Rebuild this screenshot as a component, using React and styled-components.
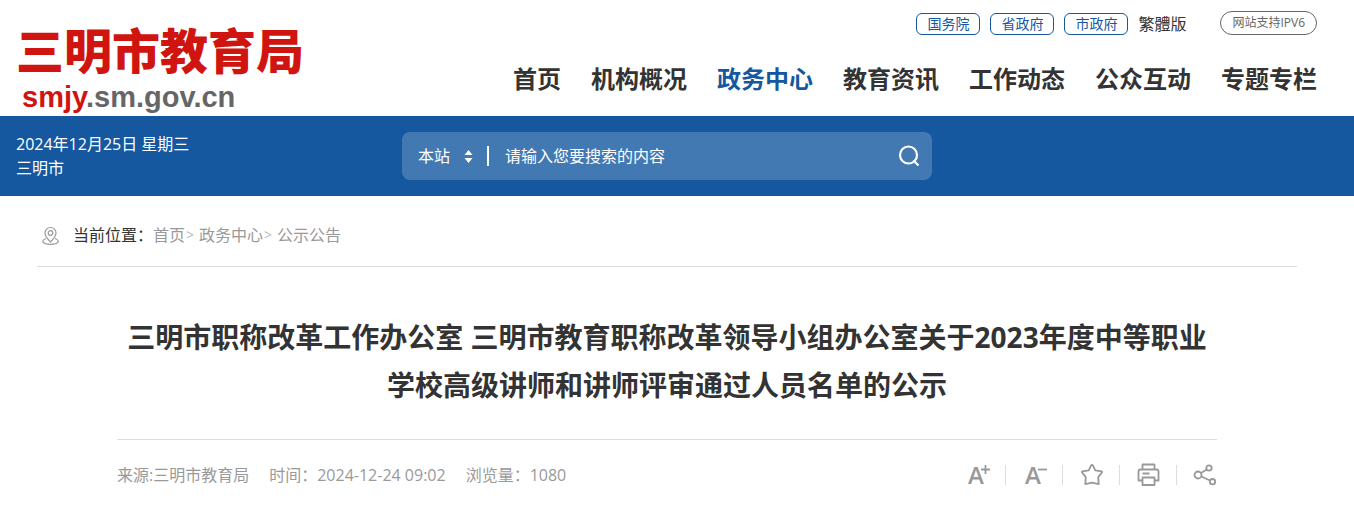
import styled, { createGlobalStyle } from 'styled-components';

const GlobalStyle = createGlobalStyle`
  * {
    box-sizing: border-box;
  }

  body {
    margin: 0;
    background: #fff;
    color: #333;
    font-family: "Open Sans", "Noto Sans CJK SC", sans-serif;
    font-size: 16px;
    line-height: 24px;
  }

  a {
    color: inherit;
    text-decoration: none;
  }

  button, input, select {
    font: inherit;
    color: inherit;
  }
`;

const Header = styled.header`
  display: flex;
  justify-content: space-between;
  padding: 11px 37px 0 16px;
  height: 116px;
`;

const Logo = styled.a`
  padding-top: 12px;
  color: #d0140f;
`;

const LogoName = styled.span`
  display: block;
  font-size: 48px;
  font-weight: 900;
  line-height: 56px;
`;

const LogoDomain = styled.span`
  display: block;
  padding-left: 6px;
  font-family: "Liberation Sans", Arial, sans-serif;
  font-size: 29px;
  font-weight: 700;
  line-height: 36px;
`;

const Gray = styled.span`
  color: #666;
`;

const HeaderRight = styled.div`
  display: flex;
  flex-direction: column;
  align-items: flex-end;
  gap: 24px;
`;

const TopLinks = styled.div`
  display: flex;
  align-items: flex-end;
  gap: 10px;
`;

const GovLink = styled.a`
  width: 64px;
  border: 1px solid #15589f;
  border-radius: 6px;
  color: #15589f;
  font-size: 14px;
  line-height: 20px;
  text-align: center;
`;

const Traditional = styled.a`
  font-family: "Noto Sans CJK TC", sans-serif;
`;

const Ipv6 = styled.span`
  margin-left: 24px;
  padding: 0 11px;
  border: 1px solid #666;
  border-radius: 12px;
  color: #666;
  font-size: 12px;
  line-height: 22px;
`;

const Nav = styled.nav`
  display: flex;
  gap: 30px;
`;

const NavLink = styled.a`
  font-size: 24px;
  font-weight: 700;
  line-height: 40px;
  color: ${(props) => (props.$active ? '#15589f' : '#333')};
`;

const Bar = styled.div`
  display: grid;
  grid-template-columns: 386px minmax(0, 530px);
  padding: 16px;
  background: #15589f;
  color: #fff;
`;

const Search = styled.form`
  display: flex;
  align-items: center;
  height: 48px;
  padding: 0 12px 0 16px;
  border-radius: 8px;
  background: rgba(255, 255, 255, 0.2);
`;

const Scope = styled.label`
  display: flex;
  align-items: center;
  gap: 12px;
  padding-right: 14px;
  border-right: 2px solid #fff;
  line-height: 20px;
`;

const ScopeSelect = styled.select`
  appearance: none;
  width: 34px;
  height: 20px;
  padding: 0;
  border: 0;
  background: none;

  option {
    color: #333;
  }
`;

const SearchInput = styled.input`
  flex: 1;
  min-width: 0;
  padding: 0 16px;
  border: 0;
  outline: 0;
  background: none;

  &::placeholder {
    color: #fff;
    opacity: 1;
  }
`;

const IconButton = styled.button`
  display: flex;
  padding: 0;
  border: 0;
  background: none;
  cursor: pointer;
`;

const Main = styled.main`
  padding: 0 57px 0 37px;
`;

const Breadcrumb = styled.nav`
  display: flex;
  align-items: center;
  padding: 27px 0 19px 4px;
  border-bottom: 1px solid #ddd;
  color: #999;

  svg {
    margin-right: 13px;
  }
`;

const Here = styled.span`
  color: #333;
`;

const Arrow = styled.span`
  margin: 0 5px 0 1px;
  color: #bbb;
  font-size: 14px;
`;

const Article = styled.article`
  max-width: 1100px;
  margin: 0 auto;
`;

const Title = styled.h1`
  margin: 0;
  padding: 46px 0 30px;
  border-bottom: 1px solid #ddd;
  font-size: 28px;
  line-height: 48px;
  text-align: center;
`;

const Meta = styled.div`
  display: flex;
  justify-content: space-between;
  align-items: center;
  padding: 23px 0;
  color: #999;
`;

const Facts = styled.div`
  display: flex;
  gap: 20px;
`;

const Tools = styled.div`
  display: flex;
`;

const Tool = styled.div`
  display: flex;
  align-items: center;
  height: 20px;
  padding: 0 16px;

  & + & {
    border-left: 1px solid #ddd;
  }

  &:last-child {
    padding-right: 0;
  }
`;

const ToolIcon = styled.svg`
  width: 24px;
  height: 24px;
  overflow: visible;
  fill: none;
  stroke: #999;
  stroke-width: 1.8;
  stroke-linejoin: round;

  text {
    fill: #999;
    stroke: none;
    font-size: 24px;
    font-weight: 600;
  }
`;

const navItems = ['首页', '机构概况', '政务中心', '教育资讯', '工作动态', '公众互动', '专题专栏'];

const tools = [
  {
    label: '放大字体',
    icon: (
      <>
        <text x="3" y="21">A</text>
        <path d="M16 6.500h9M20.500 2v9" />
      </>
    ),
  },
  {
    label: '缩小字体',
    icon: (
      <>
        <text x="3" y="21">A</text>
        <path d="M16 6.500h9" />
      </>
    ),
  },
  {
    label: '收藏',
    icon: (
      <path d="M13 2q.7 0 1 .7l2.300 4.600 6.200 1q1 .4.400 1.200l-3.700 4.600.5 7-6.700-1.400-6.700 1.400.5-7L3.100 9.500q-.6-.8.4-1.200l6.200-1L12 2.700q.3-.7 1-.7z" />
    ),
  },
  {
    label: '打印',
    icon: (
      <>
        <path d="M6.500 6.500v-5h12v5M6.500 17.500h-4v-9q0-2 2-2h16q2 0 2 2v9h-4M6.500 14.500h12v7.500h-12zM6.500 10.500h7" />
      </>
    ),
  },
  {
    label: '分享',
    icon: (
      <>
        <circle cx="5" cy="12" r="3.500" />
        <circle cx="16" cy="5" r="2.700" />
        <circle cx="19.500" cy="18.700" r="2.700" />
        <path d="M8 10l5.800-3.600M8.300 13.500l8.700 4" />
      </>
    ),
  },
];

const App = () => {
  return (
    <>
      <GlobalStyle />
      <Header>
        <Logo href="#">
          <LogoName>三明市教育局</LogoName>
          <LogoDomain>smjy<Gray>.sm.gov.cn</Gray></LogoDomain>
        </Logo>
        <HeaderRight>
          <TopLinks>
            <GovLink href="#">国务院</GovLink>
            <GovLink href="#">省政府</GovLink>
            <GovLink href="#">市政府</GovLink>
            <Traditional href="#" lang="zh-Hant">繁體版</Traditional>
            <Ipv6>网站支持IPV6</Ipv6>
          </TopLinks>
          <Nav>
            {navItems.map((item) => (
              <NavLink href="#" key={item} $active={item === '政务中心'}>{item}</NavLink>
            ))}
          </Nav>
        </HeaderRight>
      </Header>
      <Bar>
        <div>
          <div>2024年12月25日 星期三</div>
          <div>三明市</div>
        </div>
        <Search onSubmit={(event) => event.preventDefault()}>
          <Scope>
            <ScopeSelect aria-label="搜索范围">
              <option>本站</option>
            </ScopeSelect>
            <svg width="9" height="14" viewBox="0 0 9 14" fill="#fff">
              <path d="M4.500 1l4 5h-8zM4.500 14l-4-5h8z" />
            </svg>
          </Scope>
          <SearchInput type="text" aria-label="搜索" placeholder="请输入您要搜索的内容" />
          <IconButton type="submit" aria-label="搜索">
            <svg width="22" height="22" viewBox="0 0 22 22" fill="none" stroke="#fff" strokeWidth="2.200">
              <circle cx="10.500" cy="10" r="8.500" />
              <path d="M15.500 15.500l5 5" />
            </svg>
          </IconButton>
        </Search>
      </Bar>
      <Main>
        <Breadcrumb>
          <svg width="19" height="19" viewBox="0 0 19 19" fill="none" stroke="#999" strokeWidth="1.200">
            <path d="M9.500 16C6 12.500 4 9.500 4 7a5.500 5.500 0 0 1 11 0C15 9.500 13 12.500 9.500 16z" />
            <circle cx="9.500" cy="7" r="2.300" />
            <path d="M5 12.500c-5.500 2-4 5.800 4.500 5.800s10-3.800 4.500-5.800" />
          </svg>
          <Here>当前位置：</Here>
          <a href="#">首页</a>
          <Arrow>&gt;</Arrow>
          <a href="#">政务中心</a>
          <Arrow>&gt;</Arrow>
          <a href="#">公示公告</a>
        </Breadcrumb>
        <Article>
          <Title>三明市职称改革工作办公室 三明市教育职称改革领导小组办公室关于2023年度中等职业学校高级讲师和讲师评审通过人员名单的公示</Title>
          <Meta>
            <Facts>
              <span>来源:三明市教育局</span>
              <span>时间：2024-12-24 09:02</span>
              <span>浏览量：1080</span>
            </Facts>
            <Tools>
              {tools.map((tool) => (
                <Tool key={tool.label}>
                  <IconButton type="button" aria-label={tool.label}>
                    <ToolIcon viewBox="0 0 24 24">{tool.icon}</ToolIcon>
                  </IconButton>
                </Tool>
              ))}
            </Tools>
          </Meta>
        </Article>
      </Main>
    </>
  );
};

export default App;
